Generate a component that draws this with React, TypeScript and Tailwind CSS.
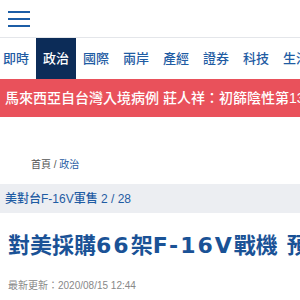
const tabs = ['即時', '政治', '國際', '兩岸', '產經', '證券', '科技', '生活']

export default function App() {
  return (
    <div className="h-[300px] w-[300px] overflow-hidden bg-white font-['Liberation_Sans','Noto_Sans_CJK_TC',sans-serif]">
      <header className="flex h-[38px] items-center border-b border-[#e4e6ea] pl-2">
        <div className="flex w-[22px] flex-col gap-[5px]">
          <span className="h-[2px] bg-[#1c5da6]" />
          <span className="h-[2px] bg-[#1c5da6]" />
          <span className="h-[2px] bg-[#1c5da6]" />
        </div>
      </header>

      <nav className="-ml-[4px] flex h-[41px] whitespace-nowrap">
        {tabs.map((t) => (
          <div
            key={t}
            className={
              t === '政治'
                ? 'flex shrink-0 items-center bg-[#0c2c58] px-[7px] text-[13px] font-medium text-white'
                : 'flex shrink-0 items-center px-[7px] text-[13px] font-medium text-[#1f5ca3]'
            }
          >
            {t}
          </div>
        ))}
      </nav>

      <div className="flex h-[38px] items-center overflow-hidden whitespace-nowrap bg-[#e9515b] pl-[5px] text-[14px] font-medium text-white">
        馬來西亞自台灣入境病例 莊人祥：初篩陰性第13例
      </div>

      <div className="pl-[31px] pt-[40px] text-[10px] text-[#555]">
        首頁 / <span className="text-[#1f5ca3]">政治</span>
      </div>

      <div className="mt-[12px] flex h-[29px] items-center bg-[#eceef2] pl-[5px] text-[12px] font-medium text-[#1f5ca3]">
        美對台F-16V軍售 2 / 28
      </div>

      <h1 className="mt-[16px] whitespace-nowrap pl-[8px] font-['Noto_Sans_CJK_TC',sans-serif] text-[22px] font-bold leading-[28px] text-[#1a5296]">
        對美採購
        <span className="font-['DejaVu_Sans',sans-serif] tracking-[2px]">66</span>
        架
        <span className="font-['DejaVu_Sans',sans-serif] tracking-[2px]">F-16V</span>
        戰機<span className="inline-block w-[9px]" />預計2026年底完成交機
      </h1>

      <p className="mt-[18px] pl-[8px] text-[10px] text-[#888]">
        最新更新：2020/08/15 12:44
      </p>
    </div>
  )
}
